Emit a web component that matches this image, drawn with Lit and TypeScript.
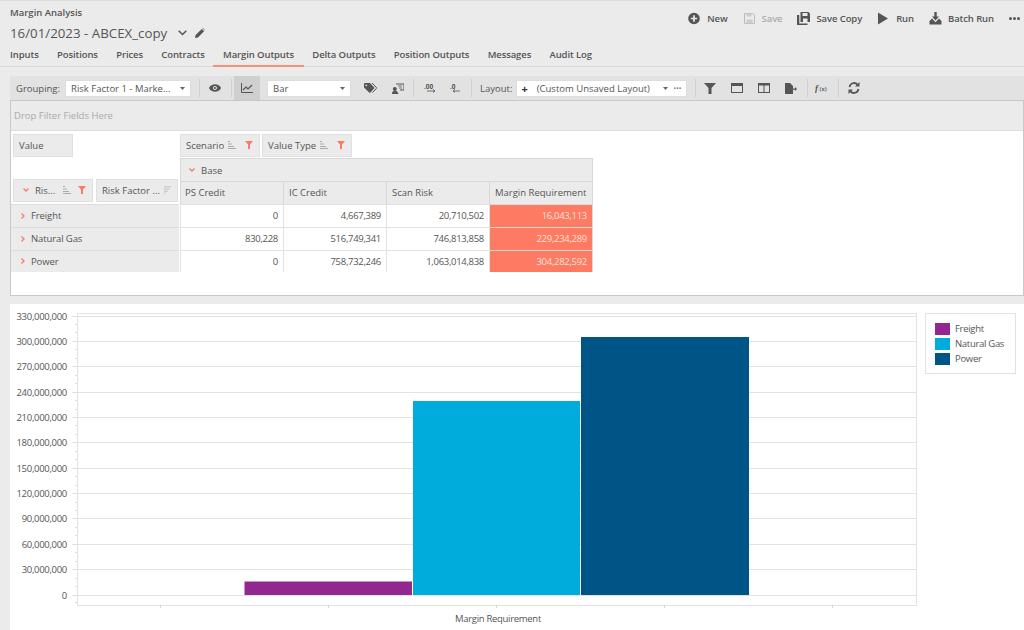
import {LitElement, html, css, svg} from 'lit';
import {customElement} from 'lit/decorators.js';

const sortIcon = html`<svg class="sort" width="8" height="8" viewBox="0 0 8 8"><path d="M0 .5h2M0 3h4M0 5.500h6M0 7.500h8" stroke="#aaa" stroke-width="1" fill="none"/></svg>`;
const sortIconRev = html`<svg class="sort" width="8" height="8" viewBox="0 0 8 8"><path d="M0 .5h8M0 3h6M0 5.500h4M0 7.500h2" stroke="#bbb" stroke-width="1" fill="none"/></svg>`;
const filterIcon = html`<svg class="filter" width="8" height="8" viewBox="0 0 8 8"><path d="M0 0h8L5 3.600V8H3V3.600z" fill="#fa7a62"/></svg>`;
const chevronDown = html`<svg class="chev" width="6" height="4" viewBox="0 0 6 4"><path d="M.5.500l2.500 2.500L5.500.5" stroke="#fa7a62" stroke-width="1.300" fill="none"/></svg>`;
const chevronRight = html`<svg class="chev" width="4" height="6" viewBox="0 0 4 6"><path d="M.5.500L3 3 .5 5.500" stroke="#fa7a62" stroke-width="1.300" fill="none"/></svg>`;
const caret = html`<svg class="caret" width="5" height="3" viewBox="0 0 5 3"><path d="M0 0h5L2.500 3z" fill="#666"/></svg>`;

const actions = [
    {label: 'New', off: false, icon: svg`<circle cx="6" cy="6.500" r="5.800" fill="#555"/><path d="M6 3.300v6.400M2.800 6.500h6.400" stroke="#ebebeb" stroke-width="1.700"/>`},
    {label: 'Save', off: true, icon: svg`<path d="M1.500 1.500h8.500l1.500 1.500v8.500h-10z" fill="none" stroke="#bbb"/><path d="M3.500 7.500h6v4h-6zM3.500 1.500h5v3h-5z" fill="#ccc"/>`},
    {label: 'Save Copy', off: false, icon: svg`<path d="M3.500 0h8l1.500 1.500v8.500H3.500z" fill="#555"/><path d="M5.500 1v3h5V1zM6 6.500h4.500V10H6z" fill="#ebebeb"/><path d="M0 3h2.300v8.500h8.200V13H0z" fill="#555"/>`},
    {label: 'Run', off: false, icon: svg`<path d="M1 .5l10 6-10 6z" fill="#555"/>`},
    {label: 'Batch Run', off: false, icon: svg`<path d="M5.300 0h2.400v4.500h2.300L6.500 8.500 3 4.500h2.300z" fill="#555"/><path d="M3 6.500L.5 9v3.500h12V9L10 6.500 6.500 10.200z" fill="#555"/>`},
];

const tabs = ['Inputs', 'Positions', 'Prices', 'Contracts', 'Margin Outputs', 'Delta Outputs', 'Position Outputs', 'Messages', 'Audit Log'];

const rows = [
    ['Freight', '0', '4,667,389', '20,710,502', '16,043,113'],
    ['Natural Gas', '830,228', '516,749,341', '746,813,858', '229,234,289'],
    ['Power', '0', '758,732,246', '1,063,014,838', '304,282,592'],
];

// chart geometry, in px of the chart panel
const zeroY = 290.5;
const stepY = 25.36;
const axisLeft = 67;
const axisRight = 906;
const axisBottom = 301;
const axisTop = 9;

@customElement('margin-chart')
export class MarginChart extends LitElement {
    static styles = css`
        :host {
            display: block;
            background: #fff;
            height: 326px;
        }
        svg {
            display: block;
        }
        text {
            font-family: "Open Sans", "Noto Sans", sans-serif;
            font-size: 9.5px;
            letter-spacing: -0.3px;
            fill: #555;
        }
    `;

    render() {
        const ticks = Array.from({length: 12}, (_, i) => i);
        const bars = [
            {x: 234.5, w: 167.5, top: 277.5, color: '#92278f'},
            {x: 403, w: 167, top: 97, color: '#00acdc'},
            {x: 571, w: 168, top: 33, color: '#005587'},
        ];
        return html`<svg width="1014" height="326" viewBox="0 0 1014 326">
            ${ticks.map(i => {
                const y = Math.round(zeroY - i * stepY) + 0.5;
                const minorA = Math.round(zeroY - (i + 1 / 3) * stepY) + 0.5;
                const minorB = Math.round(zeroY - (i + 2 / 3) * stepY) + 0.5;
                return svg`
                    <line x1="${axisLeft - 5}" x2="${axisRight}" y1="${y}" y2="${y}" stroke="#e2e2e2"/>
                    ${i < 11 ? svg`
                        <line x1="${axisLeft - 2}" x2="${axisLeft}" y1="${minorA}" y2="${minorA}" stroke="#e2e2e2"/>
                        <line x1="${axisLeft - 2}" x2="${axisLeft}" y1="${minorB}" y2="${minorB}" stroke="#e2e2e2"/>` : ''}
                    <text x="${axisLeft - 10}" y="${y + 3}" text-anchor="end">${(i * 30000000).toLocaleString('en-US')}</text>`;
            })}
            <line x1="${axisLeft - 2}" x2="${axisLeft}" y1="298.5" y2="298.5" stroke="#e2e2e2"/>
            <rect x="${axisLeft + 0.5}" y="${axisTop + 0.5}" width="${axisRight - axisLeft}" height="${axisBottom - axisTop}" fill="none" stroke="#e2e2e2"/>
            ${[150.5, 318.5, 486.5, 654.5, 822.5].map(x => svg`<line x1="${x}" x2="${x}" y1="${axisBottom}" y2="${axisBottom + 3}" stroke="#d5d5d5"/>`)}
            ${bars.map(b => svg`<rect x="${b.x}" y="${b.top}" width="${b.w}" height="${zeroY - b.top + 0.5}" fill="${b.color}"/>`)}
            <text x="488" y="318" text-anchor="middle">Margin Requirement</text>

            <rect x="915.5" y="9.5" width="90" height="60" fill="#fff" stroke="#e2e2e2"/>
            <rect x="925" y="19" width="15" height="12" fill="#92278f"/>
            <rect x="925" y="34" width="15" height="12" fill="#00acdc"/>
            <rect x="925" y="49" width="15" height="12" fill="#005587"/>
            <text x="945" y="28">Freight</text>
            <text x="945" y="43">Natural Gas</text>
            <text x="945" y="58">Power</text>
        </svg>`;
    }
}

@customElement('app-root')
export class AppRoot extends LitElement {
    static styles = css`
        :host {
            display: block;
            width: 1024px;
            height: 630px;
            overflow: hidden;
            background: #ebebeb;
            color: #555;
            font-family: "Open Sans", "Noto Sans", sans-serif;
            font-size: 9.5px;
            box-sizing: border-box;
            border-top: 1px solid #ddd;
        }
        .head {
            height: 65px;
            border-bottom: 1px solid #d8d8d8;
            padding-left: 10px;
            display: grid;
            grid-template-columns: auto 1fr;
            grid-template-rows: 20px 24px 20px;
        }
        .app-name {
            font-weight: 600;
            font-size: 9.5px;
            line-height: 24px;
        }
        .actions {
            display: flex;
            justify-content: flex-end;
            align-items: center;
            gap: 15px;
            padding: 14px 4px 0 0;
            height: 6px;
        }
        .action {
            display: flex;
            align-items: center;
            gap: 6px;
            font-weight: 600;
            letter-spacing: -0.1px;
        }
        .action.off {
            color: #aaa;
        }
        .dots {
            display: flex;
            gap: 1px;
        }
        .dots i {
            width: 3px;
            height: 3px;
            border-radius: 50%;
            background: #555;
        }
        .title {
            grid-column: 1 / 3;
            display: flex;
            align-items: center;
            font-size: 13.300px;
            font-weight: 500;
        }
        .title .chevron {
            margin-left: 11px;
        }
        .title .pencil {
            margin-left: 8px;
        }
        .tabs {
            grid-column: 1 / 3;
            display: flex;
            gap: 18.300px;
            align-items: flex-start;
            font-weight: 600;
            letter-spacing: -0.1px;
        }
        .tab {
            line-height: 19px;
            height: 22px;
            box-sizing: border-box;
        }
        .tab.on {
            padding: 0 10px;
            margin: 0 -10px;
            border-bottom: 2px solid #fa8d79;
        }

        .toolbar {
            margin: 9px 0 0 10px;
            height: 24px;
            background: #e2e2e2;
            display: flex;
            align-items: center;
            padding-left: 6px;
        }
        .label {
            margin-right: 5px;
        }
        .label.layout {
            margin: 0 4px 0 8px;
        }
        .select {
            background: #fff;
            height: 17px;
            box-sizing: border-box;
            display: flex;
            align-items: center;
            padding: 0 5px;
            justify-content: space-between;
            border: 1px solid #ddd;
        }
        .sel-group {
            width: 126px;
        }
        .sel-bar {
            width: 84px;
            margin-left: 7px;
        }
        .sel-layout {
            width: 171px;
            justify-content: flex-start;
            padding-left: 4px;
        }
        .sel-layout b {
            margin-right: 9px;
            color: #333;
            font-size: 11px;
        }
        .sel-end {
            margin-left: auto;
            display: flex;
            gap: 6px;
            align-items: center;
            color: #777;
            font-size: 7px;
        }
        .sep {
            width: 1px;
            height: 18px;
            background: #cfcfcf;
            flex: none;
        }
        .tool {
            width: 24px;
            height: 24px;
            display: flex;
            align-items: center;
            justify-content: center;
            flex: none;
        }
        .tool.on {
            background: #cfcfcf;
            width: 26px;
        }
        .eye {
            margin: 0 10px 0 9px;
        }
        .ml1 { margin-left: 1px; }
        .ml2 { margin-left: 2px; }
        .ml3 { margin-left: 3px; }
        .ml4 { margin-left: 4px; }
        .ml7 { margin-left: 7px; }
        .ml8 { margin-left: 8px; }
        .mr4 { margin-right: 4px; }

        .pivot {
            margin-left: 10px;
            height: 196px;
            box-sizing: border-box;
            border: 1px solid #c8c8c8;
            background: #fff;
        }
        .drop {
            height: 30px;
            line-height: 29px;
            padding-left: 3px;
            background: #ebebeb;
            color: #aaa;
            border-bottom: 1px solid #ddd;
            box-sizing: border-box;
        }
        .grid {
            display: grid;
            grid-template-columns: 169px 104px 103px 103px 103px;
            grid-template-rows: 27px 23px 23px 23px 23px 22px;
            width: 582px;
        }
        .value-cell {
            padding: 3px 0 0 2px;
        }
        .col-fields {
            grid-column: 2 / 6;
            display: flex;
            gap: 2px;
            padding-top: 3px;
        }
        .row-fields {
            grid-row: 2 / 4;
            display: flex;
            align-items: flex-end;
            gap: 3px;
            padding: 0 0 2px 2px;
        }
        .chip {
            background: #ebebeb;
            border: 1px solid #e0e0e0;
            box-sizing: border-box;
            height: 23px;
            display: flex;
            align-items: center;
            padding: 0 6px 1px 5px;
            white-space: nowrap;
        }
        .chip.value {
            width: 60px;
        }
        .chip.scenario {
            width: 80px;
        }
        .chip.value-type {
            width: 90px;
        }
        .chip.risk {
            width: 80px;
            padding-left: 0;
        }
        .chip.risk .sort {
            margin-left: 8px;
        }
        .chip.risk-factor {
            width: 82px;
        }
        .chip .sort {
            margin-left: 4px;
        }
        .chip .filter {
            margin-left: auto;
        }
        .chip .chev {
            margin: 0 6px 0 9px;
        }
        .base {
            grid-column: 2 / 6;
            background: #ebebeb;
            border: 1px solid #d8d8d8;
            border-bottom: none;
            display: flex;
            align-items: center;
            padding-left: 8px;
            gap: 6px;
        }
        .measure {
            background: #ebebeb;
            border: 1px solid #d8d8d8;
            border-width: 1px 1px 0 0;
            display: flex;
            align-items: center;
            padding: 0 0 1px 5px;
            box-sizing: border-box;
        }
        .measure.first {
            border-left: 1px solid #d8d8d8;
            padding-left: 4px;
        }
        .row-head {
            background: #ebebeb;
            border-top: 1px solid #ddd;
            display: flex;
            align-items: center;
            gap: 6px;
            padding: 0 0 1px 10px;
            box-sizing: border-box;
            margin-right: 1px;
            letter-spacing: -0.1px;
        }
        .num {
            border: 1px solid #e2e2e2;
            border-width: 1px 1px 0 0;
            box-sizing: border-box;
            display: flex;
            align-items: center;
            justify-content: flex-end;
            padding: 0 5px 1px 0;
            background: #fff;
            letter-spacing: -0.3px;
        }
        .num.first {
            border-left: 1px solid #e2e2e2;
        }
        .num.hot {
            background: #fd7b63;
            color: #fde0d9;
            border-color: #d8d8d8;
        }
        .chart-wrap {
            margin: 8px 0 0 10px;
        }
    `;

    renderHead() {
        return html`<div class="head">
            <div class="app-name">Margin Analysis</div>
            <div class="actions">
                ${actions.map(a => html`<div class="action ${a.off ? 'off' : ''}">
                    <svg width="13" height="13" viewBox="0 0 13 13">${a.icon}</svg>${a.label}
                </div>`)}
                <div class="dots"><i></i><i></i><i></i></div>
            </div>
            <div class="title">
                <span>16/01/2023 - ABCEX_copy</span>
                <svg class="chevron" width="9" height="6" viewBox="0 0 9 6"><path d="M.7.700l3.800 3.800L8.300.7" fill="none" stroke="#555" stroke-width="1.500"/></svg>
                <svg class="pencil" width="10" height="10" viewBox="0 0 10 10"><path d="M0 10l.6-2.900L6.800.9l2.300 2.300L2.900 9.400zM7.400.3l.5-.3 2 2-.3.500z" fill="#555"/></svg>
            </div>
            <div class="tabs">
                ${tabs.map(t => html`<div class="tab ${t === 'Margin Outputs' ? 'on' : ''}">${t}</div>`)}
            </div>
        </div>`;
    }

    renderToolbar() {
        const ic = '#555';
        return html`<div class="toolbar">
            <span class="label">Grouping:</span>
            <div class="select sel-group"><span>Risk Factor 1 - Marke...</span>${caret}</div>
            <div class="sep ml8"></div>
            <svg class="eye" width="12" height="8" viewBox="0 0 12 8"><path d="M0 4c2-5 10-5 12 0-2 5-10 5-12 0z" fill="${ic}"/><circle cx="6" cy="4" r="2" fill="#e2e2e2"/><circle cx="6" cy="4" r="1" fill="${ic}"/></svg>
            <div class="sep"></div>
            <div class="tool on ml2"><svg width="12" height="10" viewBox="0 0 12 10"><path d="M.5 0v9.500H12" fill="none" stroke="${ic}"/><path d="M2 7l3-3 2 2 4-4" fill="none" stroke="${ic}" stroke-width="1.200"/></svg></div>
            <div class="select sel-bar"><span>Bar</span>${caret}</div>
            <div class="tool ml7 mr4"><svg width="13" height="10" viewBox="0 0 13 10"><path d="M1 0h5l4 4.200a1 1 0 0 1 0 1.400L6.500 9.500a1 1 0 0 1-1.400 0L0 4.500V1a1 1 0 0 1 1-1z" fill="${ic}"/><circle cx="2.300" cy="2.300" r=".9" fill="#e2e2e2"/><path d="M8 0l4.300 4.300a1 1 0 0 1 0 1.200L8.500 9.500" fill="none" stroke="${ic}"/></svg></div>
            <div class="tool"><svg width="12" height="11" viewBox="0 0 12 11"><path d="M4 1h8v6H8" fill="none" stroke="${ic}"/><circle cx="2.800" cy="6" r="2" fill="${ic}"/><path d="M0 11c0-4 6-4 6 0zM6 3h4M7 5h3" stroke="${ic}" fill="${ic}" stroke-width=".8"/></svg></div>
            <div class="sep ml3"></div>
            <div class="tool ml4"><svg width="12" height="10" viewBox="0 0 12 10"><text x="0" y="5.500" font-size="6.500" font-weight="700" fill="${ic}">.00</text><path d="M3 8h8M9 6.300l2 1.700-2 1.500" fill="none" stroke="${ic}" stroke-width=".8"/></svg></div>
            <div class="tool ml1"><svg width="10" height="10" viewBox="0 0 10 10"><text x="0" y="5.500" font-size="6.500" font-weight="700" fill="${ic}">.0</text><path d="M10 8H3M5 6.300L3 8 5 9.500" fill="none" stroke="${ic}" stroke-width=".8"/></svg></div>
            <div class="sep ml4"></div>
            <span class="label layout">Layout:</span>
            <div class="select sel-layout">
                <b>+</b><span>(Custom Unsaved Layout)</span>
                <span class="sel-end">${caret}<span>•••</span></span>
            </div>
            <div class="sep ml8"></div>
            <div class="tool ml2"><svg width="12" height="11" viewBox="0 0 12 11"><path d="M0 0h12L7.500 5v6h-3V5z" fill="${ic}"/></svg></div>
            <div class="tool ml3"><svg width="12" height="10" viewBox="0 0 12 10"><rect x=".5" y=".5" width="11" height="9" fill="none" stroke="${ic}"/><path d="M0 0h12v3H0z" fill="${ic}"/></svg></div>
            <div class="tool ml3"><svg width="12" height="10" viewBox="0 0 12 10"><rect x=".5" y=".5" width="11" height="9" fill="none" stroke="${ic}"/><path d="M0 0h12v2.500H0zM5.500 0h1v10h-1z" fill="${ic}"/></svg></div>
            <div class="tool ml3"><svg width="12" height="11" viewBox="0 0 12 11"><path d="M0 0h5l3 3v8H0z" fill="${ic}"/><path d="M8 5.500h2V4l2 2-2 2V6.800H8z" fill="${ic}"/></svg></div>
            <div class="sep ml4"></div>
            <div class="tool ml2"><svg width="14" height="10" viewBox="0 0 14 10"><text x="0" y="8" font-size="9" font-style="italic" font-weight="700" font-family="Liberation Serif" fill="${ic}">f</text><text x="4.500" y="8" font-size="6" font-weight="600" fill="${ic}">(x)</text></svg></div>
            <div class="sep ml4"></div>
            <div class="tool ml3"><svg width="12" height="12" viewBox="0 0 12 12"><path d="M1.500 5a4.600 4.600 0 0 1 8-2.400M10.500 7a4.600 4.600 0 0 1-8 2.400" fill="none" stroke="${ic}" stroke-width="1.800"/><path d="M11.500 0v4.500H7zM.5 12V7.500H5z" fill="${ic}"/></svg></div>
        </div>`;
    }

    renderPivot() {
        return html`<div class="pivot">
            <div class="drop">Drop Filter Fields Here</div>
            <div class="grid">
                <div class="value-cell"><div class="chip value">Value</div></div>
                <div class="col-fields">
                    <div class="chip scenario">Scenario ${sortIcon}${filterIcon}</div>
                    <div class="chip value-type">Value Type ${sortIcon}${filterIcon}</div>
                </div>
                <div class="row-fields">
                    <div class="chip risk">${chevronDown}Ris... ${sortIcon}${filterIcon}</div>
                    <div class="chip risk-factor">Risk Factor ... ${sortIconRev}</div>
                </div>
                <div class="base">${chevronDown}Base</div>
                <div class="measure first">PS Credit</div>
                <div class="measure">IC Credit</div>
                <div class="measure">Scan Risk</div>
                <div class="measure">Margin Requirement</div>
                ${rows.map(r => html`
                    <div class="row-head">${chevronRight}${r[0]}</div>
                    <div class="num first">${r[1]}</div>
                    <div class="num">${r[2]}</div>
                    <div class="num">${r[3]}</div>
                    <div class="num hot">${r[4]}</div>
                `)}
            </div>
        </div>`;
    }

    render() {
        return html`
            ${this.renderHead()}
            ${this.renderToolbar()}
            ${this.renderPivot()}
            <div class="chart-wrap"><margin-chart></margin-chart></div>
        `;
    }
}
